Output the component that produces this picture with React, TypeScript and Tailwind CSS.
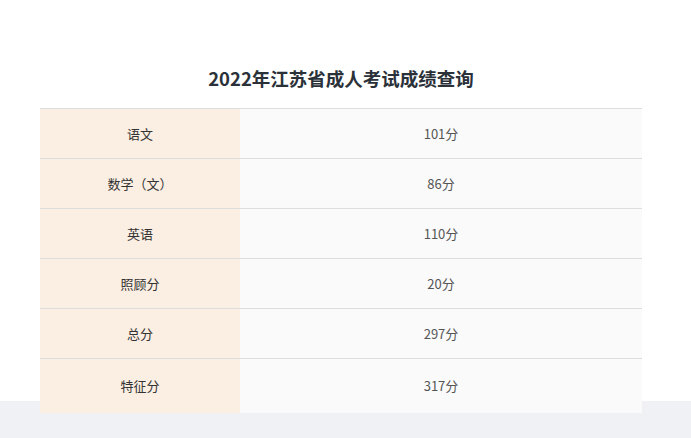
const rows: [string, string][] = [
  ["语文", "101分"],
  ["数学（文）", "86分"],
  ["英语", "110分"],
  ["照顾分", "20分"],
  ["总分", "297分"],
  ["特征分", "317分"],
];

export default function App() {
  return (
    <div
      className="min-h-[438px] bg-[linear-gradient(to_bottom,#ffffff_401px,#f0f1f5_401px)] pt-[64px]"
      style={{ fontFamily: '"Noto Sans CJK SC", "Noto Sans", sans-serif' }}
    >
      <div className="mx-[40px] w-[602px]">
        <h1 className="text-center text-[18.5px] font-bold leading-[28px] text-[#2b3139]">
          2022年江苏省成人考试成绩查询
        </h1>
        <table className="mt-[16px] w-full border-collapse text-[13px]">
          <tbody>
            {rows.map(([label, value], i) => (
              <tr
                key={label}
                className={`border-t border-[#dddddd] ${i === rows.length - 1 ? "h-[54px]" : "h-[50px]"}`}
              >
                <td className="w-[200px] bg-[#fbeee2] text-center text-[#333333]">{label}</td>
                <td className="bg-[#fafafa] text-center text-[#555555]">{value}</td>
              </tr>
            ))}
          </tbody>
        </table>
      </div>
    </div>
  );
}
